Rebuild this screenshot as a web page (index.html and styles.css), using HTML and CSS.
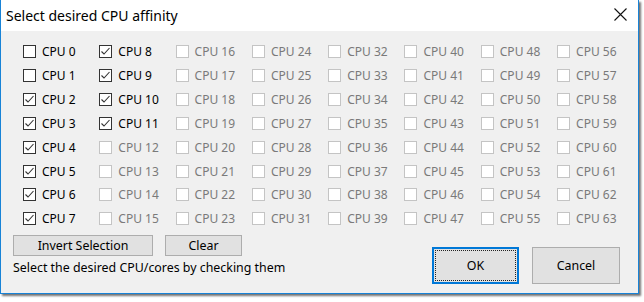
FILE: index.html
```html
<html>

<head>
    <meta charset="utf-8">
    <link rel="stylesheet" href="styles.css">
</head>

<body>
    <div class="dlg">

        <!-- title bar -->
        <div class="dlg-titlebar">
            <div class="dlg-title">Select desired CPU affinity</div>
            <svg class="dlg-close" width="13" height="13" viewBox="0 0 13 13">
                <path d="M0.5 0.5 L12.5 12.5 M12.5 0.5 L0.5 12.5" stroke="#111" stroke-width="1.1" fill="none"/>
            </svg>
        </div>

        <!-- content -->
        <div class="dlg-content">
            <div class="cpu-grid">
                <label class="cpu"><span class="box"></span>CPU 0</label>
                <label class="cpu"><span class="box"></span>CPU 1</label>
                <label class="cpu"><span class="box"><svg viewBox="0 0 11 11"><path d="M1.5 5.5 L4 8 L9.5 2"/></svg></span>CPU 2</label>
                <label class="cpu"><span class="box"><svg viewBox="0 0 11 11"><path d="M1.5 5.5 L4 8 L9.5 2"/></svg></span>CPU 3</label>
                <label class="cpu"><span class="box"><svg viewBox="0 0 11 11"><path d="M1.5 5.5 L4 8 L9.5 2"/></svg></span>CPU 4</label>
                <label class="cpu"><span class="box"><svg viewBox="0 0 11 11"><path d="M1.5 5.5 L4 8 L9.5 2"/></svg></span>CPU 5</label>
                <label class="cpu"><span class="box"><svg viewBox="0 0 11 11"><path d="M1.5 5.5 L4 8 L9.5 2"/></svg></span>CPU 6</label>
                <label class="cpu"><span class="box"><svg viewBox="0 0 11 11"><path d="M1.5 5.5 L4 8 L9.5 2"/></svg></span>CPU 7</label>

                <label class="cpu"><span class="box"><svg viewBox="0 0 11 11"><path d="M1.5 5.5 L4 8 L9.5 2"/></svg></span>CPU 8</label>
                <label class="cpu"><span class="box"><svg viewBox="0 0 11 11"><path d="M1.5 5.5 L4 8 L9.5 2"/></svg></span>CPU 9</label>
                <label class="cpu"><span class="box"><svg viewBox="0 0 11 11"><path d="M1.5 5.5 L4 8 L9.5 2"/></svg></span>CPU 10</label>
                <label class="cpu"><span class="box"><svg viewBox="0 0 11 11"><path d="M1.5 5.5 L4 8 L9.5 2"/></svg></span>CPU 11</label>
                <label class="cpu off"><span class="box"></span>CPU 12</label>
                <label class="cpu off"><span class="box"></span>CPU 13</label>
                <label class="cpu off"><span class="box"></span>CPU 14</label>
                <label class="cpu off"><span class="box"></span>CPU 15</label>

                <label class="cpu off"><span class="box"></span>CPU 16</label>
                <label class="cpu off"><span class="box"></span>CPU 17</label>
                <label class="cpu off"><span class="box"></span>CPU 18</label>
                <label class="cpu off"><span class="box"></span>CPU 19</label>
                <label class="cpu off"><span class="box"></span>CPU 20</label>
                <label class="cpu off"><span class="box"></span>CPU 21</label>
                <label class="cpu off"><span class="box"></span>CPU 22</label>
                <label class="cpu off"><span class="box"></span>CPU 23</label>

                <label class="cpu off"><span class="box"></span>CPU 24</label>
                <label class="cpu off"><span class="box"></span>CPU 25</label>
                <label class="cpu off"><span class="box"></span>CPU 26</label>
                <label class="cpu off"><span class="box"></span>CPU 27</label>
                <label class="cpu off"><span class="box"></span>CPU 28</label>
                <label class="cpu off"><span class="box"></span>CPU 29</label>
                <label class="cpu off"><span class="box"></span>CPU 30</label>
                <label class="cpu off"><span class="box"></span>CPU 31</label>

                <label class="cpu off"><span class="box"></span>CPU 32</label>
                <label class="cpu off"><span class="box"></span>CPU 33</label>
                <label class="cpu off"><span class="box"></span>CPU 34</label>
                <label class="cpu off"><span class="box"></span>CPU 35</label>
                <label class="cpu off"><span class="box"></span>CPU 36</label>
                <label class="cpu off"><span class="box"></span>CPU 37</label>
                <label class="cpu off"><span class="box"></span>CPU 38</label>
                <label class="cpu off"><span class="box"></span>CPU 39</label>

                <label class="cpu off"><span class="box"></span>CPU 40</label>
                <label class="cpu off"><span class="box"></span>CPU 41</label>
                <label class="cpu off"><span class="box"></span>CPU 42</label>
                <label class="cpu off"><span class="box"></span>CPU 43</label>
                <label class="cpu off"><span class="box"></span>CPU 44</label>
                <label class="cpu off"><span class="box"></span>CPU 45</label>
                <label class="cpu off"><span class="box"></span>CPU 46</label>
                <label class="cpu off"><span class="box"></span>CPU 47</label>

                <label class="cpu off"><span class="box"></span>CPU 48</label>
                <label class="cpu off"><span class="box"></span>CPU 49</label>
                <label class="cpu off"><span class="box"></span>CPU 50</label>
                <label class="cpu off"><span class="box"></span>CPU 51</label>
                <label class="cpu off"><span class="box"></span>CPU 52</label>
                <label class="cpu off"><span class="box"></span>CPU 53</label>
                <label class="cpu off"><span class="box"></span>CPU 54</label>
                <label class="cpu off"><span class="box"></span>CPU 55</label>

                <label class="cpu off"><span class="box"></span>CPU 56</label>
                <label class="cpu off"><span class="box"></span>CPU 57</label>
                <label class="cpu off"><span class="box"></span>CPU 58</label>
                <label class="cpu off"><span class="box"></span>CPU 59</label>
                <label class="cpu off"><span class="box"></span>CPU 60</label>
                <label class="cpu off"><span class="box"></span>CPU 61</label>
                <label class="cpu off"><span class="box"></span>CPU 62</label>
                <label class="cpu off"><span class="box"></span>CPU 63</label>
            </div>

            <!-- buttons -->
            <div class="dlg-footer">
                <div class="footer-left">
                    <div class="btn-row">
                        <button class="btn btn-invert">Invert Selection</button>
                        <button class="btn btn-clear">Clear</button>
                    </div>
                    <div class="hint">Select the desired CPU/cores by checking them</div>
                </div>
                <div class="footer-right">
                    <button class="btn btn-big btn-default">OK</button>
                    <button class="btn btn-big">Cancel</button>
                </div>
            </div>
        </div>
    </div>
</body>

</html>
```

FILE: styles.css
```css
body {
    margin: 0;
    background: white;
    font-family: "Noto Sans", "Open Sans", sans-serif;
}

.dlg {
    --accent: #1883d7;
    --face: #f0f0f0;
    box-sizing: border-box;
    width: 639px;
    height: 294px;
    display: flex;
    flex-direction: column;
    border: 1px solid var(--accent);
    border-top: none;
    background: var(--face);
    box-shadow: 2px 2px 2px rgb(0 0 0 / 55%);
}

/* title bar */

.dlg-titlebar {
    display: flex;
    align-items: center;
    height: 31px;
    background: white;
}

.dlg-title {
    padding-left: 5px;
    font-size: 14px;
    line-height: 31px;
    color: #000;
}

.dlg-close {
    margin-left: auto;
    margin-right: 11px;
    margin-top: -2px;
}

/* content */

.dlg-content {
    padding: 9px 18px 0 12px;
}

.cpu-grid {
    margin-left: 10px;
    display: grid;
    grid-auto-flow: column;
    grid-template-columns: repeat(8, 76.3px);
    grid-template-rows: repeat(8, 23.85px);
}

.cpu {
    display: flex;
    align-items: center;
    gap: 6px;
    font-size: 12px;
    color: #000;
    white-space: nowrap;
}

.cpu .box {
    box-sizing: border-box;
    width: 13px;
    height: 13px;
    padding: 0;
    border: 1px solid #333;
    background: white;
    display: flex;
}

.cpu .box svg {
    width: 11px;
    height: 11px;
}

.cpu .box path {
    fill: none;
    stroke: #333;
    stroke-width: 1.1;
}

.cpu.off {
    color: #7a7a7a;
}

.cpu.off .box {
    border-color: #c4c4c4;
}

/* footer */

.dlg-footer {
    display: flex;
    align-items: flex-start;
    margin-top: 4px;
}

.btn-row {
    display: flex;
    gap: 12px;
}

.hint {
    margin-top: 4px;
    font-size: 12.4px;
    line-height: 16px;
}

.footer-right {
    margin-left: auto;
    margin-top: 12px;
    display: flex;
    gap: 13px;
}

.btn {
    box-sizing: border-box;
    height: 21px;
    padding: 0;
    border: 1px solid #adadad;
    background: #e1e1e1;
    font-family: inherit;
    font-size: 12.4px;
    color: #000;
    position: relative;
}

.btn-invert {
    width: 140px;
}

.btn-clear {
    width: 77px;
}

.btn-big {
    width: 88px;
    height: 37px;
}

.btn-default {
    width: 87px;
    border: 2px solid #0078d7;
}

.btn-default::before {
    content: "";
    position: absolute;
    inset: 1px;
    border: 1px dotted #222;
}
```
